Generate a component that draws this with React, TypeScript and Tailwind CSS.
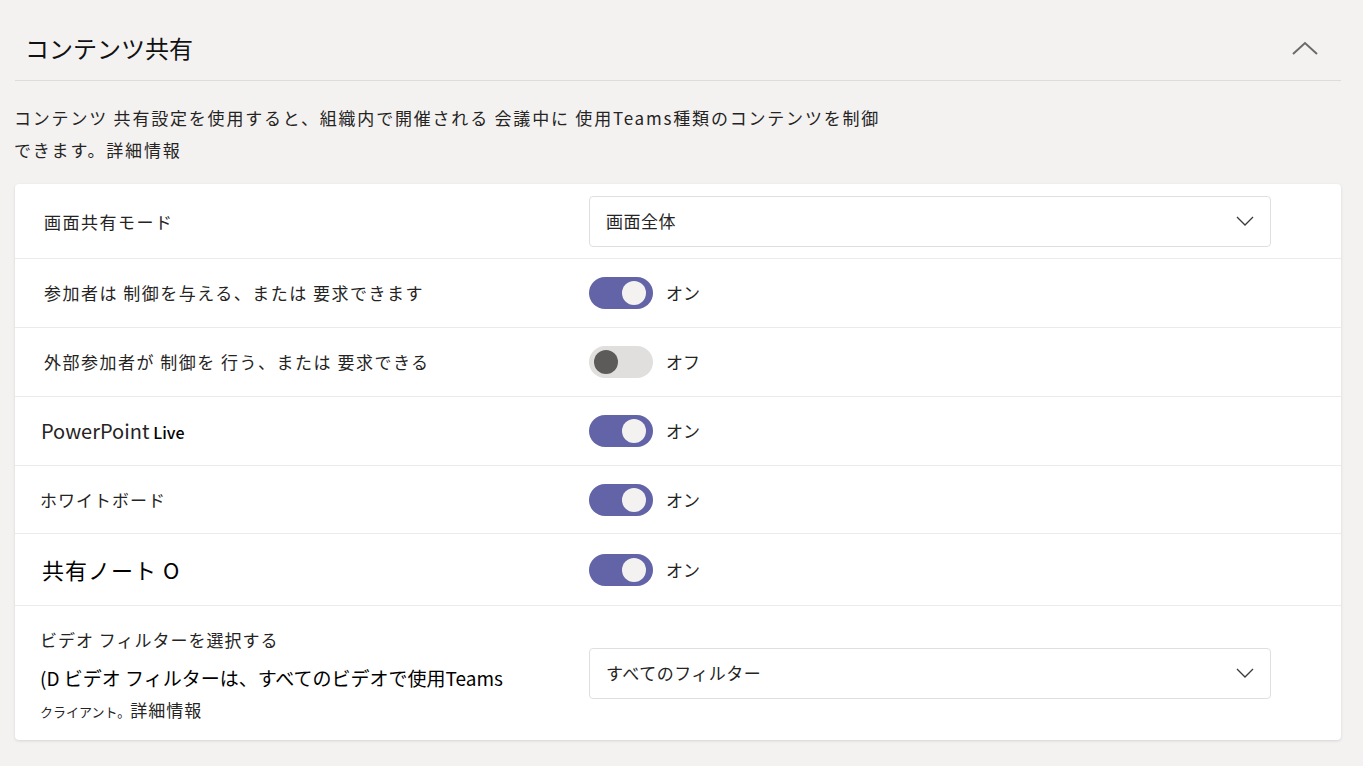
import React from "react";

const font = { fontFamily: '"Noto Sans CJK JP", "Noto Sans", sans-serif' };

function Toggle({ on }: { on: boolean }) {
  return (
    <div className="flex items-center gap-[13px]">
      <div
        className={
          on
            ? "flex h-[32px] w-[64px] items-center justify-end rounded-full bg-[#6264a7] pr-[7px]"
            : "flex h-[32px] w-[64px] items-center justify-start rounded-full bg-[#e1dfdd] pl-[5px]"
        }
      >
        <div className={on ? "h-[24px] w-[24px] rounded-full bg-[#f3f2f1]" : "h-[24px] w-[24px] rounded-full bg-[#5c5b5a]"} />
      </div>
      <span className="text-[17px] text-[#252423]">{on ? "オン" : "オフ"}</span>
    </div>
  );
}

function Chevron() {
  return (
    <svg width="18" height="10" viewBox="0 0 18 10" fill="none">
      <path d="M1 1 L9 9 L17 1" stroke="#3b3a39" strokeWidth="1.3" />
    </svg>
  );
}

function Select({ value }: { value: string }) {
  return (
    <div className="flex h-[51px] w-[682px] items-center justify-between rounded-[4px] border border-[#e1dfdd] bg-white pl-[16px] pr-[16px]">
      <span className="text-[17px] tracking-[0.5px] text-[#252423]">{value}</span>
      <Chevron />
    </div>
  );
}

function Row({ label, children, h }: { label: React.ReactNode; children: React.ReactNode; h: string }) {
  return (
    <div className={`flex items-center border-b border-[#edebe9] ${h}`}>
      <div className="w-[574px] shrink-0 pl-[29px] text-[17px] tracking-[1.5px] text-[#252423]">{label}</div>
      <div className="flex-1">{children}</div>
    </div>
  );
}

export default function App() {
  return (
    <div className="min-h-[766px] w-full bg-[#f3f2f1] pl-[15px] pr-[22px] pt-[20px]" style={font}>
      <div className="flex h-[61px] items-center justify-between border-b border-[#dedcda] pb-[4px] pl-[10px] pr-[23px]">
        <h1 className="text-[24px] font-normal text-[#111]">コンテンツ共有</h1>
        <svg width="26" height="14" viewBox="0 0 26 14" fill="none">
          <path d="M1 13 L13 2 L25 13" stroke="#6b6a69" strokeWidth="2" />
        </svg>
      </div>
      <p className="mt-[21px] -ml-[1px] text-[17px] leading-[32px] tracking-[1.8px] text-[#252423]">
        コンテンツ 共有設定を使用すると、組織内で開催される 会議中に 使用Teams種類のコンテンツを制御
        <br />
        できます。詳細情報
      </p>
      <div className="mt-[18px] overflow-hidden rounded-[4px] bg-white shadow-[0_1px_3px_rgba(0,0,0,0.12)]">
        <Row h="h-[75px]" label={<span className="relative top-[1px]">画面共有モード</span>}>
          <Select value="画面全体" />
        </Row>
        <Row h="h-[69px]" label="参加者は 制御を与える、または 要求できます">
          <Toggle on />
        </Row>
        <Row h="h-[69px]" label="外部参加者が 制御を 行う、または 要求できる">
          <Toggle on={false} />
        </Row>
        <Row
          h="h-[69px]"
          label={
            <span className="-ml-[3px] tracking-normal">
              <span className="text-[20px]">PowerPoint</span>{" "}
              <span className="text-[16px] font-medium text-black">Live</span>
            </span>
          }
        >
          <Toggle on />
        </Row>
        <Row h="h-[68px]" label={<span className="-ml-[4px] tracking-[1px]">ホワイトボード</span>}>
          <Toggle on />
        </Row>
        <Row h="h-[72px]" label={<span className="-ml-[2px] text-[22px] tracking-[1px] text-black">共有ノート O</span>}>
          <Toggle on />
        </Row>
        <div className="flex h-[134px] items-center">
          <div className="w-[574px] shrink-0 pl-[25px] pt-[6px] text-[#252423]">
            <div className="text-[17px] leading-[30px] tracking-[1px]">ビデオ フィルターを選択する</div>
            <div className="mt-[8px] text-[19px] leading-[30px] text-black">
              (D ビデオ フィルターは、すべてのビデオで使用Teams
            </div>
            <div className="mt-[2px] leading-[30px]">
              <span className="text-[13px]">クライアント。</span>
              <span className="text-[17px] tracking-[1px]">詳細情報</span>
            </div>
          </div>
          <div className="flex-1">
            <Select value="すべてのフィルター" />
          </div>
        </div>
      </div>
    </div>
  );
}
